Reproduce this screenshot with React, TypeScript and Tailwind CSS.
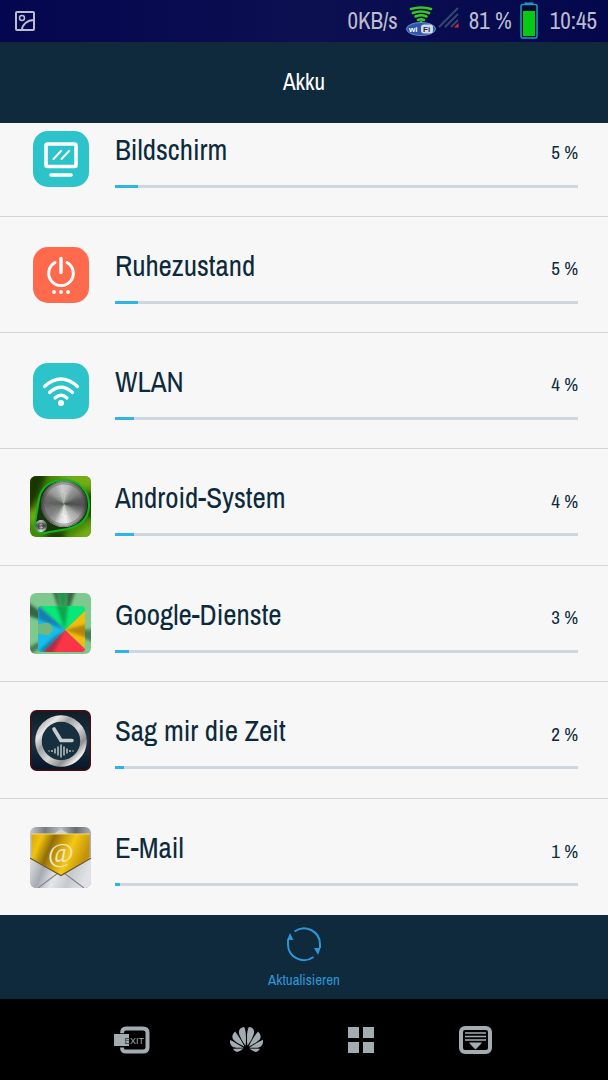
import React from 'react';
import { SiHuawei } from 'react-icons/si';

type AppUsage = {
  name: string;
  percent: number;
  icon: React.ReactNode;
};

// grey values around a full turn, starting at the right and going clockwise
const steel = [80, 120, 170, 190, 240, 225, 160, 130, 120, 100, 110, 150, 170, 205, 190, 150, 130, 95];

const BrushedDisc = ({ cx, cy, r }: { cx: number; cy: number; r: number }) => {
  const count = 72;
  const wedges = Array.from({ length: count }, (_, i) => {
    const pos = (i / count) * steel.length;
    const from = steel[Math.floor(pos)];
    const to = steel[(Math.floor(pos) + 1) % steel.length];
    const grey = Math.round(from + (to - from) * (pos % 1));
    const a = (i / count) * Math.PI * 2;
    const b = ((i + 1.5) / count) * Math.PI * 2;
    return (
      <path
        key={i}
        d={`M${cx} ${cy}L${cx + r * Math.cos(a)} ${cy + r * Math.sin(a)}L${cx + r * Math.cos(b)} ${cy + r * Math.sin(b)}Z`}
        fill={`rgb(${grey},${grey},${grey})`}
      />
    );
  });
  return <g>{wedges}</g>;
};

const ScreenIcon = () => (
  <svg viewBox="0 0 56 56" className="h-14 w-14" fill="none" stroke="white" strokeLinecap="round">
    <rect width="56" height="56" rx="15" fill="#2cc3cb" stroke="none" />
    <rect x="13" y="13" width="30" height="22.500" rx="1.500" strokeWidth="3.600" />
    <path d="M20.500 28l7.500-8M28.500 28l7.500-8" strokeWidth="2" />
    <path d="M18 44h20" strokeWidth="3.600" />
  </svg>
);

const PowerIcon = () => (
  <svg viewBox="0 0 56 56" className="h-14 w-14" fill="none" stroke="white" strokeLinecap="round">
    <rect width="56" height="56" rx="15" fill="#ff6a4d" stroke="none" />
    <path d="M22 15.500a12.300 12.300 0 1 0 12 0" strokeWidth="3" />
    <path d="M28 11.500v14" strokeWidth="3.400" />
    <g fill="white" stroke="none">
      <circle cx="21" cy="45" r="1.900" />
      <circle cx="28" cy="45" r="1.900" />
      <circle cx="35" cy="45" r="1.900" />
    </g>
  </svg>
);

const WlanIcon = () => (
  <svg viewBox="0 0 56 56" className="h-14 w-14" fill="none" stroke="white" strokeLinecap="round">
    <rect width="56" height="56" rx="15" fill="#2cc3cb" stroke="none" />
    <path d="M11.500 23.500q16.500-15 33 0M16.500 29.500q11.500-10.500 23 0M22 35q6-5.500 12 0" strokeWidth="3.200" />
    <circle cx="28" cy="40" r="3" fill="white" stroke="none" />
  </svg>
);

const AndroidSystemIcon = () => (
  <svg viewBox="0 0 61 61" className="h-[61px] w-[61px]">
    <defs>
      <clipPath id="androidTile">
        <rect width="61" height="61" rx="6" />
      </clipPath>
      <filter id="androidSoft" x="-50%" y="-50%" width="200%" height="200%">
        <feGaussianBlur stdDeviation="3" />
      </filter>
      <radialGradient id="knobShade">
        <stop offset="0.850" stopColor="#222" stopOpacity="0" />
        <stop offset="1" stopColor="#222" stopOpacity="0.600" />
      </radialGradient>
    </defs>
    <g clipPath="url(#androidTile)">
      <rect width="61" height="61" fill="#46880a" />
      <g filter="url(#androidSoft)">
        <path d="M22-4h43v16H48zM36 65l29-20v20zM-4 42l14-18v28z" fill="#74ad14" />
        <path d="M-4-4h22L4 34h-8zM57 16h8v26h-8zM14 65l4-9 20-2-6 11z" fill="#123604" />
      </g>
      <path
        d="M34 4c15 0 25 11 25 25S50 50 37 53L14 57C7 58 4 53 5 47l4-24C11 11 21 4 34 4z"
        fill="#16350c"
        stroke="#0fb51a"
        strokeWidth="2"
      />
      <BrushedDisc cx={34} cy={28} r={23} />
      <circle cx="34" cy="28" r="23" fill="url(#knobShade)" />
      <circle cx="34" cy="28" r="20" fill="none" stroke="#555" strokeOpacity="0.400" />
      <BrushedDisc cx={11} cy={50} r={6} />
      <circle cx="11" cy="50" r="3" fill="none" stroke="#333" strokeOpacity="0.600" />
    </g>
  </svg>
);

const GoogleServicesIcon = () => (
  <svg viewBox="0 0 61 61" className="h-[61px] w-[61px]">
    <defs>
      <clipPath id="googleTile">
        <rect width="61" height="61" rx="6" />
      </clipPath>
      <clipPath id="puzzle">
        <rect x="8" y="13" width="47" height="46" rx="3" />
      </clipPath>
      <filter id="googleSoft" x="-50%" y="-50%" width="200%" height="200%">
        <feGaussianBlur stdDeviation="1.600" />
      </filter>
    </defs>
    <g clipPath="url(#googleTile)">
      <rect width="61" height="61" fill="#80c98e" />
      <g filter="url(#googleSoft)" fill="#214c30">
        <path d="M22-4h5l5 30zM37-4h9L36 26zM-4 8l36 26L-4 22z" opacity="0.800" />
        <path d="M65 36v14L37 38zM-4 56l14-8 4 4L0 62z" opacity="0.600" />
        <path d="M27-4h10l-3 30z" fill="#1f9448" />
      </g>
      <g clipPath="url(#puzzle)">
        <path d="M8 12h48v7L35 37z" fill="#08e878" />
        <path d="M56 17v39L35 37z" fill="#f4bb0b" />
        <path d="M35 37l20 19v4H12z" fill="#fb3547" />
        <path d="M8 13l27 24-23 23H8z" fill="#18bdec" />
        <g filter="url(#googleSoft)">
          <path d="M26 12h12l-3 25z" fill="#0f9a43" opacity="0.850" />
          <path d="M8 12l27 25L8 26z" fill="#126495" opacity="0.700" />
          <path d="M35 37L13 60h10z" fill="#8e213b" opacity="0.600" />
          <path d="M24 44l11-7-20 22-6-1z" fill="#16587c" opacity="0.600" />
          <path d="M35 37l23-6v14z" fill="#966e0a" opacity="0.700" />
        </g>
        <path d="M7 31h5a7 6 0 1 1 0 10H7z" fill="#6fb981" />
      </g>
    </g>
  </svg>
);

const ClockIcon = () => (
  <svg viewBox="0 0 61 61" className="h-[61px] w-[61px]">
    <defs>
      <linearGradient id="clockRing" x1="0" y1="0" x2="1" y2="1">
        <stop offset="0" stopColor="#999" />
        <stop offset="0.200" stopColor="#e8e8e8" />
        <stop offset="0.350" stopColor="#a0a0a0" />
        <stop offset="0.550" stopColor="#d8d8d8" />
        <stop offset="0.750" stopColor="#909090" />
        <stop offset="0.880" stopColor="#eee" />
        <stop offset="1" stopColor="#aaa" />
      </linearGradient>
      <linearGradient id="clockBack" x1="0" y1="0" x2="0" y2="1">
        <stop offset="0" stopColor="#101c24" />
        <stop offset="0.500" stopColor="#183548" />
        <stop offset="1" stopColor="#061526" />
      </linearGradient>
    </defs>
    <rect x="0.750" y="0.750" width="59.500" height="59.500" rx="6" fill="url(#clockBack)" stroke="#4a0d10" strokeWidth="1.500" />
    <circle cx="31" cy="31" r="22.500" fill="#17303f" stroke="url(#clockRing)" strokeWidth="6.500" />
    <path d="M24 19l7 11.500h11" fill="none" stroke="#c9cccd" strokeWidth="3.600" strokeLinejoin="round" strokeLinecap="round" />
    <path
      d="M19 40.500v1M22 40v2M25 38.500v5M28 36.500v9M31 34.500v13M34 36.500v9M37 38.500v5M40 40v2M43 40.500v1"
      stroke="#bcc2c5"
      strokeWidth="1.500"
    />
  </svg>
);

const MailIcon = () => (
  <svg viewBox="0 0 61 61" className="h-[61px] w-[61px]">
    <defs>
      <clipPath id="mailTile">
        <rect width="61" height="61" rx="6" />
      </clipPath>
      <linearGradient id="mailTop">
        <stop offset="0" stopColor="#c5c8ca" />
        <stop offset="0.250" stopColor="#777b7d" />
        <stop offset="0.500" stopColor="#b9bcbe" />
        <stop offset="0.750" stopColor="#666a6c" />
        <stop offset="1" stopColor="#aeb1b3" />
      </linearGradient>
      <linearGradient id="mailFlap" x1="0" y1="0" x2="1" y2="0.300">
        <stop offset="0" stopColor="#d7a50a" />
        <stop offset="0.180" stopColor="#f1c30c" />
        <stop offset="0.380" stopColor="#8f6d08" />
        <stop offset="0.550" stopColor="#cf9e0a" />
        <stop offset="0.720" stopColor="#f5c814" />
        <stop offset="1" stopColor="#c39208" />
      </linearGradient>
      <linearGradient id="mailBody" x1="0" y1="0" x2="1" y2="0.200">
        <stop offset="0" stopColor="#e2e4e7" />
        <stop offset="0.280" stopColor="#a7abb1" />
        <stop offset="0.500" stopColor="#e4e6e9" />
        <stop offset="0.750" stopColor="#c6c9ce" />
        <stop offset="1" stopColor="#dfe1e4" />
      </linearGradient>
    </defs>
    <g clipPath="url(#mailTile)">
      <rect width="61" height="61" fill="url(#mailTop)" />
      <path d="M22 8l9-6 9 6z" fill="#cfd1d2" />
      <path d="M0 30h61v31H0z" fill="url(#mailBody)" />
      <path d="M8 61l20-15M54 61L34 46" stroke="#83878d" strokeWidth="1.200" />
      <path d="M1.500 7h58v24L31 48 1.500 31z" fill="url(#mailFlap)" />
      <path d="M0 31l31 17.500L61 31" fill="none" stroke="#6b5410" strokeWidth="1.200" />
      <path d="M1.500 7h58" stroke="#f2dc75" />
    </g>
    <text x="31" y="35" textAnchor="middle" fontSize="28" fill="#efe6c4" className="font-['Liberation_Serif']">
      @
    </text>
  </svg>
);

const apps: AppUsage[] = [
  { name: 'Bildschirm', percent: 5, icon: <ScreenIcon /> },
  { name: 'Ruhezustand', percent: 5, icon: <PowerIcon /> },
  { name: 'WLAN', percent: 4, icon: <WlanIcon /> },
  { name: 'Android-System', percent: 4, icon: <AndroidSystemIcon /> },
  { name: 'Google-Dienste', percent: 3, icon: <GoogleServicesIcon /> },
  { name: 'Sag mir die Zeit', percent: 2, icon: <ClockIcon /> },
  { name: 'E-Mail', percent: 1, icon: <MailIcon /> },
];

const StatusBar = () => (
  <div className="flex h-[42px] items-center bg-linear-to-r from-[#04064f] via-[#0c0f50] to-[#05074c] pr-[11px] pl-[15px] text-[23px] text-[#bcbdd0]">
    <svg viewBox="0 0 20 20" className="h-5 w-5" fill="none" stroke="#bcbdd0" strokeWidth="2">
      <rect x="1" y="1" width="18" height="18" rx="1" />
      <circle cx="7" cy="7" r="2.500" strokeWidth="1.500" />
      <path d="M7 19c0-5 5-10 12-10" />
    </svg>
    <span className="ml-auto">0KB/s</span>
    <svg viewBox="0 0 30 30" className="ml-2 h-[30px] w-[30px]" fill="none">
      <g stroke="#35cb1c" strokeWidth="2.600" strokeLinecap="round">
        <path d="M5 3q10-3 20 0M7 7q8-3 16 0M9.500 10.500q5.500-2.500 11 0M12 14q3-1.500 6 0" />
        <path d="M15 16v2" strokeWidth="3" />
      </g>
      <ellipse cx="15" cy="23" rx="14.500" ry="6.500" fill="#2d55a8" stroke="#6f8fd0" />
      <rect x="15" y="18.500" width="12" height="9" rx="3" fill="#d5dbe6" />
      <text x="3" y="26" fontSize="8" fontWeight="bold" fill="white" className="font-['Liberation_Sans']">wi</text>
      <text x="17" y="26" fontSize="8" fontWeight="bold" fill="#27314a" className="font-['Liberation_Sans']">Fi</text>
    </svg>
    <svg viewBox="0 0 21 21" className="mb-2 ml-[2px] h-[21px] w-[21px]" stroke="#35466f" strokeWidth="2">
      <path d="M1 20L20 1M7 20L20 7M13 20l7-7" />
      <path d="M20.500 16v4.500H16z" fill="#e02a35" stroke="none" />
    </svg>
    <span className="ml-[10px]">81 %</span>
    <svg viewBox="0 0 18 37" className="mb-px ml-2 h-[37px] w-[18px]">
      <path d="M4.500 1.500h9" stroke="#1c9dbb" strokeWidth="2" />
      <rect x="1" y="2.500" width="16" height="33.500" rx="1.500" fill="#050a38" stroke="#1c9dbb" strokeWidth="1.500" />
      <rect x="3" y="9" width="12" height="25" fill="#04cb12" />
    </svg>
    <span className="ml-3">10:45</span>
  </div>
);

const UsageRow = ({ name, percent, icon }: AppUsage) => (
  <li className="flex min-h-[116px] flex-1 items-center border-b border-[#d3d5d6] px-[30px] last:border-b-0">
    <div className="mr-6 flex w-[61px] shrink-0 justify-center">{icon}</div>
    <div className="flex-1">
      <div className="flex h-10 items-center justify-between">
        <h2 className="text-[29px] leading-10">{name}</h2>
        <span className="pt-[6px] text-[19px]">{percent} %</span>
      </div>
      <div className="mt-[15px] h-[3px] bg-[#cdd7dd]">
        <div className="h-full bg-[#2fb4e6]" style={{ width: `${percent}%` }} />
      </div>
    </div>
  </li>
);

const NavigationBar = () => (
  <nav className="flex h-[81px] bg-black px-[75px] text-[#a3adb1]">
    <button aria-label="Beenden" className="flex flex-1 items-center justify-center">
      <svg viewBox="0 0 36 28" className="h-7 w-9" fill="none">
        <path d="M8 7.500C8 4 9 2.500 12 2.500h17c3 0 4.500 1.500 4.500 4v15c0 3-1.500 4-4.500 4H12c-3 0-4-1-4-4" stroke="currentColor" strokeWidth="4" />
        <path d="M5 7.500h9v13H5z" fill="black" />
        <rect y="8" width="15" height="12" fill="currentColor" />
        <text x="10.500" y="17.500" fontSize="9" fill="#30383b" className="font-['Liberation_Sans']">E</text>
        <text x="16" y="17.500" fontSize="9" fill="currentColor" className="font-['Liberation_Sans']">XIT</text>
      </svg>
    </button>
    <button aria-label="Startseite" className="flex flex-1 items-center justify-center">
      <SiHuawei className="h-[33px] w-[33px]" />
    </button>
    <button aria-label="Apps" className="flex flex-1 items-center justify-center">
      <svg viewBox="0 0 28 28" className="h-7 w-7" fill="currentColor">
        <path d="M1 1h11v11H1zM16 1h11v11H16zM1 16h11v11H1zM16 16h11v11H16z" />
      </svg>
    </button>
    <button aria-label="Benachrichtigungen" className="flex flex-1 items-center justify-center">
      <svg viewBox="0 0 33 28" className="h-7 w-[33px]" fill="none" stroke="currentColor">
        <rect x="2" y="2" width="29" height="24" rx="4" strokeWidth="4" />
        <path d="M6 7h21M6 10.500h21M6 14h21" strokeWidth="1.600" />
        <path d="M10 16.500h13l-2 2.500-4.500 4.500L12 19z" fill="currentColor" stroke="none" />
      </svg>
    </button>
  </nav>
);

const App = () => {
  return (
    <div className="flex min-h-screen flex-col bg-[#f7f7f7] font-['Liberation_Sans_Narrow','Arial_Narrow','Archivo_Narrow','Roboto_Condensed','Open_Sans_Condensed',Roboto,sans-serif] text-[#0d2a3c]">
      <div className="relative z-10">
        <StatusBar />
        <header className="flex h-[81px] items-center justify-center bg-[#0e2a3c] text-white">
          <h1 className="text-[23px]">Akku</h1>
        </header>
      </div>

      {/* the list is scrolled a little way under the header */}
      <ul className="-mt-[22px] flex flex-1 flex-col">
        {apps.map((app) => (
          <UsageRow key={app.name} {...app} />
        ))}
      </ul>

      <button className="flex h-[84px] flex-col items-center bg-[#0e2a3c] pt-[11px] text-[#2f95d5]">
        <svg viewBox="0 0 36 36" className="h-9 w-9" fill="none" stroke="currentColor" strokeWidth="2">
          <path d="M8.500 5.500A16 16 0 0 1 34 18v4M27.500 31A16 16 0 0 1 2 18v-4" />
          <path d="M4 7l3.500 7H1zM28 22h6.500L32 29z" fill="currentColor" stroke="none" />
        </svg>
        <span className="mt-2 text-[15px] leading-5">Aktualisieren</span>
      </button>

      <NavigationBar />
    </div>
  );
};

export default App;
